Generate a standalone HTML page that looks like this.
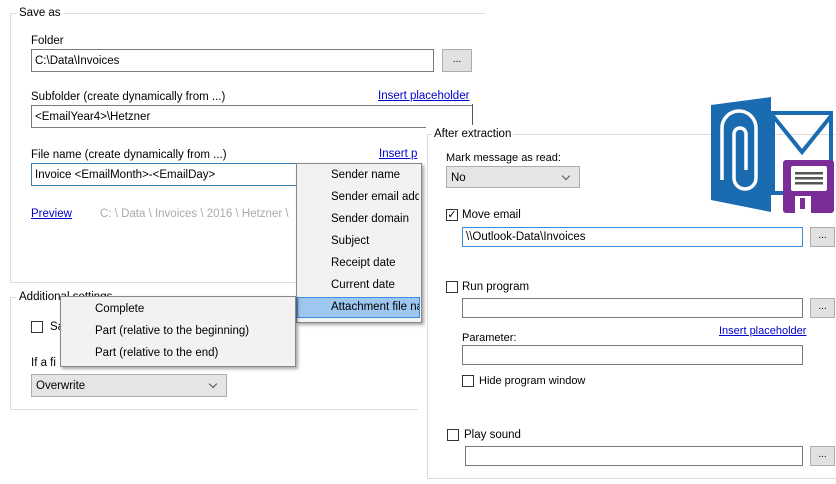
<!DOCTYPE html>
<html><head><meta charset="utf-8"><style>
body{margin:0;width:836px;height:484px;background:#fff;position:relative;overflow:hidden;font-family:"Liberation Sans",sans-serif;font-size:11.5px;color:#000}
.a{position:absolute}
.t{position:absolute;white-space:nowrap;line-height:14px}
.in{position:absolute;border:1px solid #7a7a7a;background:#fff;box-sizing:border-box;padding:4px 3px;line-height:14px;white-space:nowrap;overflow:hidden}
.btn{position:absolute;border:1px solid #adadad;background:#e1e1e1;box-sizing:border-box;text-align:center;font-size:10px;line-height:16px}
.lk{position:absolute;color:#0000cc;text-decoration:underline;white-space:nowrap;line-height:14px}
.cb{position:absolute;width:12px;height:12px;border:1px solid #333;background:#fff;box-sizing:border-box}
.sel{position:absolute;border:1px solid #adadad;background:#e5e5e5;box-sizing:border-box;padding:4px 4px;line-height:14px}
.sel:after{content:"";position:absolute;right:10px;top:6px;width:5px;height:5px;border-right:1px solid #555;border-bottom:1px solid #555;transform:rotate(45deg)}
.gl{position:absolute;background:#dcdcdc}
.mi{position:absolute;white-space:nowrap;line-height:14px}
</style></head><body>
<div class="gl" style="left:10px;top:13px;width:475px;height:1px"></div>
<div class="gl" style="left:10px;top:13px;width:1px;height:270px"></div>
<div class="gl" style="left:10px;top:282px;width:408px;height:1px"></div>
<div class="t" style="left:16px;top:6px;background:#fff;padding:0 3px">Save as</div>
<div class="t" style="left:31px;top:34px">Folder</div>
<div class="in" style="left:31px;top:49px;width:403px;height:23px">C:\Data\Invoices</div>
<div class="btn" style="left:442px;top:49px;width:30px;height:23px;line-height:20px">...</div>
<div class="t" style="left:31px;top:90px">Subfolder (create dynamically from ...)</div>
<div class="lk" style="left:378px;top:89px">Insert placeholder</div>
<div class="in" style="left:31px;top:105px;width:442px;height:23px">&lt;EmailYear4&gt;\Hetzner</div>
<div class="t" style="left:31px;top:148px">File name (create dynamically from ...)</div>
<div class="lk" style="left:379px;top:147px">Insert p</div>
<div class="in" style="left:31px;top:163px;width:270px;height:23px;border-color:#3c7fb1">Invoice &lt;EmailMonth&gt;-&lt;EmailDay&gt;</div>
<div class="lk" style="left:31px;top:207px">Preview</div>
<div class="t" style="left:100px;top:207px;color:#aaa">C: \ Data \ Invoices \ 2016 \ Hetzner \</div>
<div class="gl" style="left:10px;top:297px;width:408px;height:1px"></div>
<div class="gl" style="left:10px;top:297px;width:1px;height:113px"></div>
<div class="gl" style="left:10px;top:409px;width:408px;height:1px"></div>
<div class="t" style="left:16px;top:290px;background:#fff;padding:0 3px">Additional settings</div>
<div class="cb" style="left:31px;top:321px"></div>
<div class="t" style="left:50px;top:320px">Sa</div>
<div class="t" style="left:31px;top:356px">If a fi</div>
<div class="sel" style="left:31px;top:374px;width:196px;height:23px">Overwrite</div>
<div class="a" style="left:296px;top:163px;width:124px;height:158px;background:#f2f2f2;border:1px solid #888;box-shadow:2px 2px 3px rgba(0,0,0,.35)"></div>
<div class="a" style="left:297px;top:297px;width:123px;height:21px;background:#9dc7ef;border:1px solid #3d8ee0;box-sizing:border-box"></div>
<div class="mi" style="left:331px;top:168px">Sender name</div>
<div class="mi" style="left:331px;top:190px;width:88px;overflow:hidden">Sender email address</div>
<div class="mi" style="left:331px;top:212px">Sender domain</div>
<div class="mi" style="left:331px;top:234px">Subject</div>
<div class="mi" style="left:331px;top:256px">Receipt date</div>
<div class="mi" style="left:331px;top:278px">Current date</div>
<div class="mi" style="left:331px;top:300px;width:88px;overflow:hidden">Attachment file name</div>
<div class="a" style="left:60px;top:296px;width:234px;height:69px;background:#f2f2f2;border:1px solid #888;box-shadow:2px 2px 3px rgba(0,0,0,.35)"></div>
<div class="mi" style="left:95px;top:302px">Complete</div>
<div class="mi" style="left:95px;top:324px">Part (relative to the beginning)</div>
<div class="mi" style="left:95px;top:346px">Part (relative to the end)</div>
<div class="a" style="left:426px;top:124px;width:410px;height:360px;background:#fff"></div>
<div class="a" style="left:472px;top:104px;width:1px;height:21px;background:#555"></div>
<div class="gl" style="left:427px;top:134px;width:409px;height:1px"></div>
<div class="gl" style="left:427px;top:134px;width:1px;height:345px"></div>
<div class="gl" style="left:427px;top:478px;width:409px;height:1px"></div>
<div class="t" style="left:432px;top:127px;background:#fff;padding:0 2px">After extraction</div>
<div class="t" style="left:446px;top:151px;font-size:11px">Mark message as read:</div>
<div class="sel" style="left:446px;top:166px;width:134px;height:22px">No</div>
<div class="cb" style="left:446px;top:209px;font-size:11px;line-height:10px;text-align:center">✓</div>
<div class="t" style="left:462px;top:208px">Move email</div>
<div class="in" style="left:462px;top:227px;width:341px;height:20px;border-color:#3c8fd6;padding:2px 3px">\\Outlook-Data\Invoices</div>
<div class="btn" style="left:810px;top:227px;width:25px;height:20px">...</div>
<div class="cb" style="left:446px;top:281px"></div>
<div class="t" style="left:462px;top:280px">Run program</div>
<div class="in" style="left:462px;top:298px;width:341px;height:20px"></div>
<div class="btn" style="left:810px;top:298px;width:25px;height:20px">...</div>
<div class="t" style="left:462px;top:331px;font-size:11px">Parameter:</div>
<div class="lk" style="left:719px;top:324px;font-size:11px">Insert placeholder</div>
<div class="in" style="left:462px;top:345px;width:341px;height:20px"></div>
<div class="cb" style="left:462px;top:375px"></div>
<div class="t" style="left:479px;top:374px;font-size:11px">Hide program window</div>
<div class="cb" style="left:447px;top:429px"></div>
<div class="t" style="left:464px;top:428px">Play sound</div>
<div class="in" style="left:465px;top:446px;width:338px;height:20px"></div>
<div class="btn" style="left:810px;top:446px;width:25px;height:20px">...</div>
<svg class="a" style="left:700px;top:90px" width="136" height="130" viewBox="700 90 136 130">
<rect x="773" y="113" width="58" height="80" fill="none" stroke="#1a6bb0" stroke-width="4"/>
<path d="M773 116 L802 152 L831 116" fill="none" stroke="#1a6bb0" stroke-width="4"/>
<polygon points="711,105 771,97 771,212 711,200" fill="#1a6bb0"/>
<path d="M746 170 L746 134 A6 6 0 0 0 734 134 L734 178 A11 11 0 0 0 756 178 L756 128 A17 17 0 0 0 722 128 L722 180" fill="none" stroke="#fff" stroke-width="3.5"/>
<rect x="783" y="160" width="51" height="53" rx="3" fill="#7b2d97"/>
<rect x="791" y="166" width="36" height="25" rx="2" fill="#fff"/>
<rect x="795" y="172" width="28" height="2.5" fill="#555"/>
<rect x="795" y="177" width="28" height="2.5" fill="#555"/>
<rect x="795" y="182" width="28" height="2.5" fill="#555"/>
<rect x="795" y="196" width="16" height="17" fill="#fff"/>
<rect x="800" y="198" width="5" height="11" fill="#7b2d97"/>
</svg>
</body></html>
